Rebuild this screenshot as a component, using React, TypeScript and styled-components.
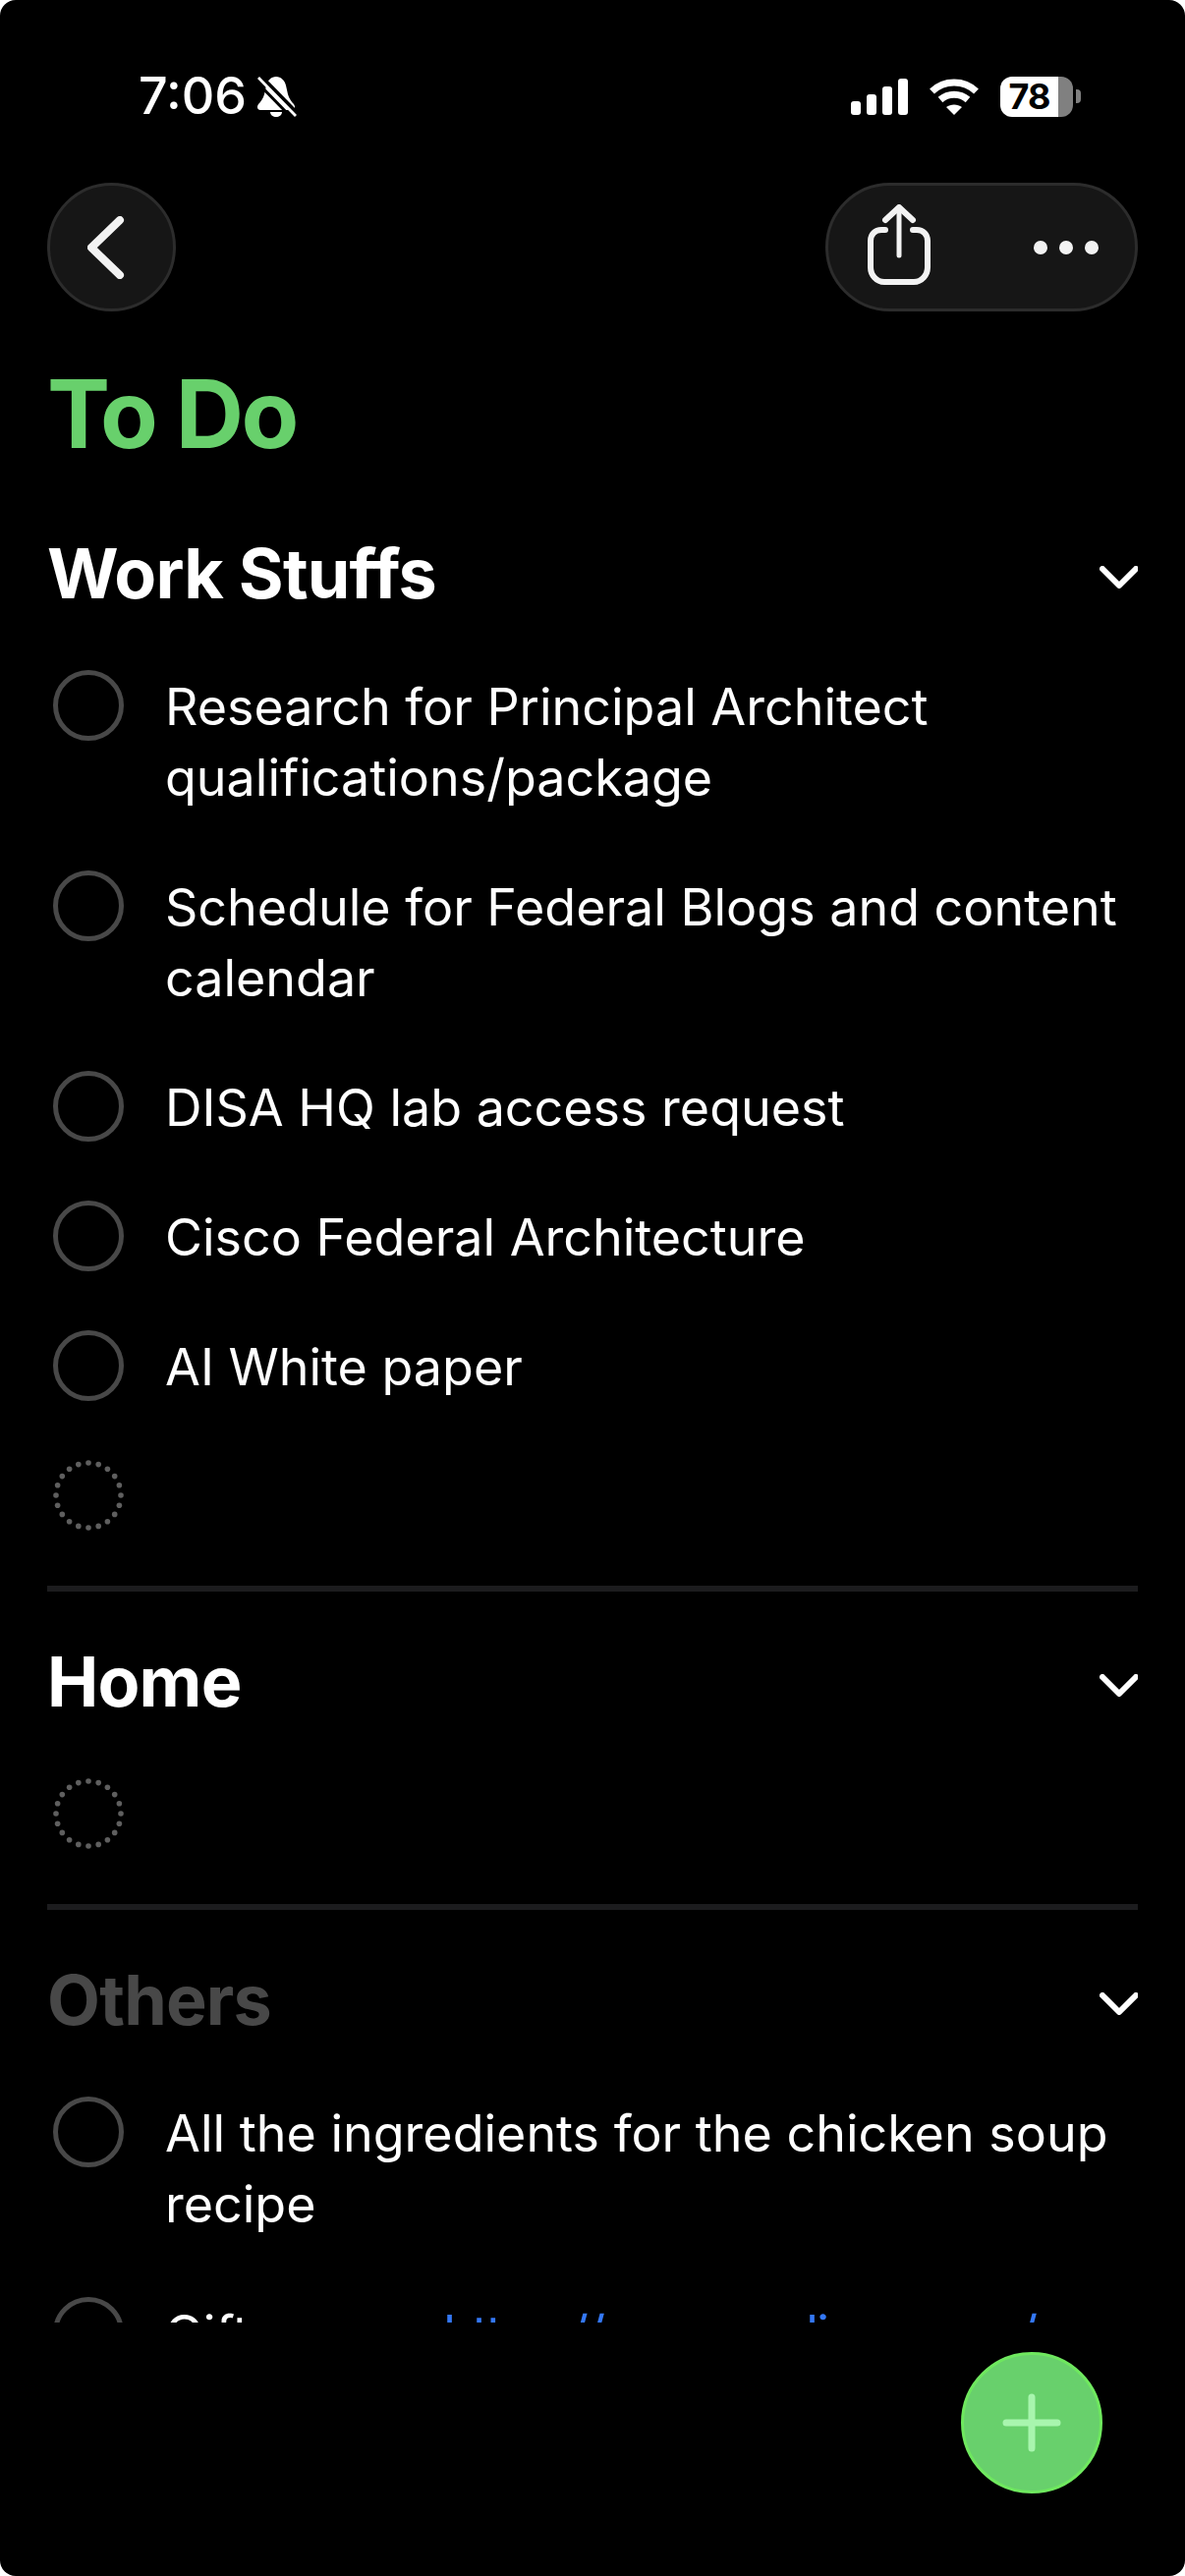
import styled, { createGlobalStyle } from 'styled-components';

const GlobalStyle = createGlobalStyle`
  html, body {
    margin: 0;
    padding: 0;
    background: #fff;
  }
  * {
    box-sizing: border-box;
  }
`;

const Screen = styled.div`
  position: relative;
  display: flex;
  flex-direction: column;
  width: 1206px;
  height: 2622px;
  overflow: hidden;
  border-radius: 16px;
  background: #000;
  color: #fff;
  font-family: Inter, "Liberation Sans", sans-serif;
`;

const StatusBar = styled.div`
  display: flex;
  align-items: center;
  justify-content: space-between;
  height: 46px;
  margin-top: 75px;
  padding: 0 106px 0 141px;
`;

const StatusLeft = styled.div`
  display: flex;
  align-items: center;
  gap: 11px;
`;

const Time = styled.span`
  font-size: 52px;
  font-weight: 500;
  line-height: 46px;
`;

const StatusRight = styled.div`
  display: flex;
  align-items: center;
  gap: 22px;
`;

const Battery = styled.div`
  display: flex;
  align-items: center;
  gap: 3px;
`;

const BatteryBody = styled.div`
  display: flex;
  align-items: center;
  justify-content: center;
  width: 74px;
  height: 41px;
  padding-right: 15px;
  border-radius: 12px;
  background: linear-gradient(to right, #fff 80%, #808080 80%);
  color: #000;
  font-size: 36px;
  font-weight: 700;
  letter-spacing: -1px;
`;

const BatteryNub = styled.div`
  width: 5px;
  height: 14px;
  border-radius: 0 4px 4px 0;
  background: #808080;
`;

const NavBar = styled.div`
  display: flex;
  align-items: center;
  justify-content: space-between;
  margin-top: 65px;
  padding: 0 48px;
`;

const RoundButton = styled.div`
  display: flex;
  align-items: center;
  justify-content: center;
  width: 131px;
  height: 131px;
  padding-right: 12px;
  border: 3px solid #2c2c2c;
  border-radius: 50%;
  background: #161616;
`;

const ActionPill = styled.div`
  display: flex;
  align-items: center;
  justify-content: space-between;
  width: 318px;
  height: 131px;
  padding: 0 37px 0 40px;
  border: 3px solid #2c2c2c;
  border-radius: 66px;
  background: #161616;
`;

const Dots = styled.div`
  display: flex;
  gap: 12px;
`;

const Dot = styled.span`
  width: 14px;
  height: 14px;
  border-radius: 50%;
  background: #f2f2f2;
`;

const PageTitle = styled.h1`
  margin: 46px 0 0 48px;
  color: #68d06c;
  font-size: 96px;
  font-weight: 700;
  line-height: 116px;
  letter-spacing: -2.5px;
`;

const Scroller = styled.div`
  flex: 1;
  height: 0;
  margin: 13px 48px 258px;
  overflow: hidden;
`;

const Section = styled.section`
  border-bottom: 6px solid #1c1c1e;
  padding-bottom: 56px;
`;

const SectionHeader = styled.div`
  display: flex;
  align-items: center;
  justify-content: space-between;
  padding: 56px 0 62px;
`;

const SectionName = styled.h2<{ $muted?: boolean }>`
  margin: 0;
  color: ${(p) => (p.$muted ? '#484848' : '#fff')};
  font-size: 70px;
  font-weight: 700;
  line-height: 72px;
  letter-spacing: -0.8px;
`;

const ChevronSvg = styled.svg`
  margin: 6px -1px 0 0;
`;

const Rows = styled.ul`
  display: flex;
  flex-direction: column;
  gap: 60px;
  margin: 0;
  padding: 0;
  list-style: none;
`;

const Row = styled.li`
  display: flex;
  align-items: flex-start;
  gap: 42px;
  min-height: 72px;
  padding-left: 6px;
`;

const Check = styled.span`
  flex: 0 0 72px;
  width: 72px;
  height: 72px;
  border: 5px solid #484848;
  border-radius: 50%;
`;

const RowText = styled.div`
  flex: 1;
  margin-bottom: -2px;
  padding-top: 2px;
  font-size: 52px;
  font-weight: 400;
  line-height: 72px;
`;

const LinkText = styled.span`
  color: #3478f6;
  letter-spacing: -1.5px;
`;

const AddButton = styled.div`
  position: absolute;
  left: 978px;
  top: 2394px;
  display: flex;
  align-items: center;
  justify-content: center;
  width: 144px;
  height: 144px;
  border: 3px solid #6fe85f;
  border-radius: 50%;
  background: #68d06c;
`;

const BellOff = () => (
  <svg width="40" height="41" viewBox="0 0 40 41" fill="none">
    <path
      d="M19 0c5 0 9 4 10 9l2 9c1 4 4 8 6 10 2 3 1 6-2 6H3c-3 0-4-3-2-6 2-2 5-6 6-10l2-9c1-5 5-9 10-9z"
      fill="#fff"
    />
    <path d="M13 36h12c0 3-3 5-6 5s-6-2-6-5z" fill="#fff" />
    <path d="M3 -1l38 39" stroke="#000" strokeWidth="4" />
    <path d="M1 1l38 39" stroke="#fff" strokeWidth="2.800" />
    <path d="M-2 4l36 37" stroke="#000" strokeWidth="3" />
  </svg>
);

const Signal = () => (
  <svg width="58" height="37" viewBox="0 0 58 37" fill="#fff">
    <rect x="0" y="23" width="10" height="14" rx="3" />
    <rect x="16" y="16" width="10" height="21" rx="3" />
    <rect x="32" y="8" width="10" height="29" rx="3" />
    <rect x="48" y="0" width="10" height="37" rx="3" />
  </svg>
);

const Wifi = () => (
  <svg width="50" height="37" viewBox="0 0 50 37" fill="none" stroke="#fff" strokeWidth="7">
    <path d="M2.500 13C15 1 35 1 47.500 13" />
    <path d="M11 21.500c8-7 20-7 28 0" />
    <path d="M25 37l-8-8c4.500-3.500 11.500-3.500 16 0z" fill="#fff" stroke="none" />
  </svg>
);

const BackChevron = () => (
  <svg width="38" height="64" viewBox="0 0 38 64" fill="none">
    <path d="M33 4L4 32l29 28" stroke="#f2f2f2" strokeWidth="8" strokeLinecap="round" strokeLinejoin="round" />
  </svg>
);

const ShareIcon = () => (
  <svg width="64" height="88" viewBox="0 0 64 88" fill="none" stroke="#f2f2f2" strokeWidth="6" strokeLinecap="round" strokeLinejoin="round">
    <path d="M18 26h-4C7.500 26 3 30.500 3 37v27c0 8 6 15 14 15h30c8 0 14-7 14-15V37c0-6.500-4.500-11-11-11h-4" />
    <path d="M32 52V4" strokeWidth="5" />
    <path d="M18 16L32 3l14 13" />
  </svg>
);

const SectionChevron = () => (
  <ChevronSvg width="40" height="23" viewBox="0 0 40 23" fill="none">
    <path d="M3 3l17 17L37 3" stroke="#fff" strokeWidth="6" strokeLinecap="round" strokeLinejoin="round" />
  </ChevronSvg>
);

// the "nothing typed yet" ring, 20 dots around a circle
const DottedRing = () => (
  <svg width="72" height="72" viewBox="0 0 72 72" fill="#5f5f5f">
    {Array.from({ length: 20 }, (_, i) => {
      const a = (i / 20) * Math.PI * 2;
      return <circle key={i} cx={36 + 33 * Math.cos(a)} cy={36 + 33 * Math.sin(a)} r="2.800" />;
    })}
  </svg>
);

const PlusIcon = () => (
  <svg width="60" height="60" viewBox="0 0 60 60" fill="none">
    <path d="M30 4v52M4 30h52" stroke="#a8f5ae" strokeWidth="7" strokeLinecap="round" />
  </svg>
);

const workItems = [
  'Research for Principal Architect qualifications/package',
  'Schedule for Federal Blogs and content calendar',
  'DISA HQ lab access request',
  'Cisco Federal Architecture',
  'AI White paper',
];

export default function App() {
  return (
    <Screen>
      <GlobalStyle />
      <StatusBar>
        <StatusLeft>
          <Time>7:06</Time>
          <BellOff />
        </StatusLeft>
        <StatusRight>
          <Signal />
          <Wifi />
          <Battery>
            <BatteryBody>78</BatteryBody>
            <BatteryNub />
          </Battery>
        </StatusRight>
      </StatusBar>

      <NavBar>
        <RoundButton>
          <BackChevron />
        </RoundButton>
        <ActionPill>
          <ShareIcon />
          <Dots>
            <Dot />
            <Dot />
            <Dot />
          </Dots>
        </ActionPill>
      </NavBar>

      <PageTitle>To Do</PageTitle>

      <Scroller>
        <Section>
          <SectionHeader>
            <SectionName>Work Stuffs</SectionName>
            <SectionChevron />
          </SectionHeader>
          <Rows>
            {workItems.map((item) => (
              <Row key={item}>
                <Check />
                <RowText>{item}</RowText>
              </Row>
            ))}
            <Row>
              <DottedRing />
            </Row>
          </Rows>
        </Section>

        <Section>
          <SectionHeader>
            <SectionName>Home</SectionName>
            <SectionChevron />
          </SectionHeader>
          <Rows>
            <Row>
              <DottedRing />
            </Row>
          </Rows>
        </Section>

        <section>
          <SectionHeader>
            <SectionName $muted>Others</SectionName>
            <SectionChevron />
          </SectionHeader>
          <Rows>
            <Row>
              <Check />
              <RowText>All the ingredients for the chicken soup recipe</RowText>
            </Row>
            <Row>
              <Check />
              <RowText>
                Gift source <LinkText>https://www.melissa.com/</LinkText>
              </RowText>
            </Row>
          </Rows>
        </section>
      </Scroller>

      <AddButton>
        <PlusIcon />
      </AddButton>
    </Screen>
  );
}
